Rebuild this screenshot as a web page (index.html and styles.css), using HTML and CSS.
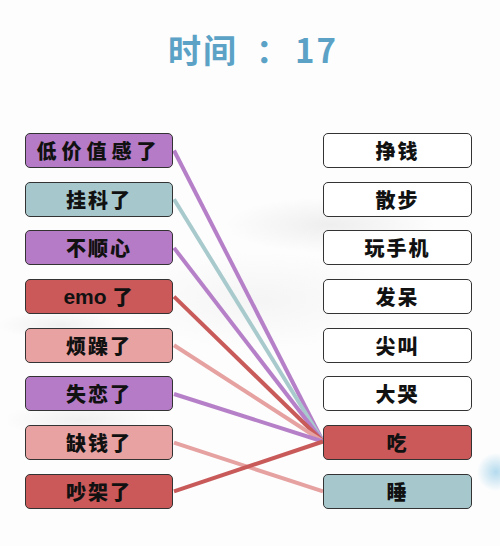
FILE: index.html
```html
<!DOCTYPE html>
<html lang="zh">

<head>
    <meta charset="UTF-8">
    <meta name="viewport" content="width=device-width, initial-scale=1.0">
    <title>连线</title>
    <link rel="stylesheet" href="styles.css">
</head>

<body>
    <div class="screen">
        <h1 class="timer">时间<span class="colon">：</span>17</h1>

        <div class="board">
            <!-- 连好的线: 左侧格子右边缘 -> 右侧格子左边缘 -->
            <svg class="links" viewBox="0 0 447 376" width="447" height="376">
                <line class="purple" x1="149" y1="17.5" x2="298" y2="308.5" />
                <line class="teal" x1="149" y1="66.2" x2="298" y2="308.5" />
                <line class="purple" x1="149" y1="114.9" x2="298" y2="308.5" />
                <line class="red" x1="149" y1="163.6" x2="298" y2="308.5" />
                <line class="pink" x1="149" y1="212.3" x2="298" y2="308.5" />
                <line class="purple" x1="149" y1="261" x2="298" y2="308.5" />
                <line class="pink" x1="149" y1="309.7" x2="298" y2="358.4" />
                <line class="red" x1="149" y1="358.4" x2="298" y2="308.5" />
            </svg>

            <div class="word purple wide">低价值感了</div>
            <div class="word blank">挣钱</div>

            <div class="word teal">挂科了</div>
            <div class="word blank">散步</div>

            <div class="word purple">不顺心</div>
            <div class="word blank">玩手机</div>

            <div class="word red"><span class="latin">emo</span>了</div>
            <div class="word blank">发呆</div>

            <div class="word pink">烦躁了</div>
            <div class="word blank">尖叫</div>

            <div class="word purple">失恋了</div>
            <div class="word blank">大哭</div>

            <div class="word pink">缺钱了</div>
            <div class="word red">吃</div>

            <div class="word red">吵架了</div>
            <div class="word teal">睡</div>
        </div>
    </div>
</body>
</html>
```

FILE: styles.css
```css
body, html {
    margin: 0;
    padding: 0;
    width: 100%;
    height: 100%;
    overflow: hidden;
}

.screen {
    width: 500px;
    height: 546px;
    box-sizing: border-box;
    padding-top: 29px;
    font-family: "Noto Sans CJK SC", "Noto Sans", sans-serif;
    /* 淡淡的水墨背景 */
    background:
        radial-gradient(ellipse 150px 40px at 330px 225px, rgba(200, 200, 200, 0.28), transparent 70%),
        radial-gradient(ellipse 200px 70px at 260px 300px, rgba(215, 215, 215, 0.22), transparent 70%),
        radial-gradient(ellipse 90px 20px at 60px 325px, rgba(200, 200, 200, 0.25), transparent 70%),
        radial-gradient(ellipse 110px 25px at 80px 420px, rgba(200, 200, 200, 0.25), transparent 70%),
        radial-gradient(circle 24px at 496px 472px, rgba(120, 190, 225, 0.55), transparent 80%),
        #fdfdfd;
}

.timer {
    margin: 0;
    padding-left: 6px;
    height: 40px;
    line-height: 40px;
    text-align: center;
    font-size: 33px;
    font-weight: 700;
    letter-spacing: 2px;
    color: #5ba2c6;
}

.timer .colon {
    margin: 0 4px 0 18px;
}

.board {
    position: relative;
    width: 447px;
    margin: 64px 0 0 25px;
    display: grid;
    grid-template-columns: 148px 1fr 149px;
    grid-auto-rows: 35px;
    row-gap: 13.7px;
}

.board .word:nth-of-type(odd) {
    grid-column: 1;
}

.board .word:nth-of-type(even) {
    grid-column: 3;
}

.links {
    position: absolute;
    top: 0;
    left: 0;
    pointer-events: none;
}

.links line {
    stroke-width: 4;
    stroke-linecap: butt;
}

.links line.purple { stroke: #b680c8; }
.links line.teal { stroke: #a8cacd; }
.links line.red { stroke: #c95a5a; }
.links line.pink { stroke: #e6a1a1; }

.word {
    position: relative;
    display: flex;
    justify-content: center;
    align-items: center;
    border: 1.5px solid #333;
    border-radius: 5px;
    font-size: 20px;
    font-weight: 900;
    letter-spacing: 2px;
    color: #111;
    background-color: #fff;
}

.word.wide {
    letter-spacing: 5px;
}

.word .latin {
    font-family: "Liberation Sans", Arial, sans-serif;
    font-weight: 700;
    font-size: 21px;
    letter-spacing: 0;
    margin-right: 6px;
}

.word.blank { background-color: #fff; }
.word.purple { background-color: #b57bc6; }
.word.teal { background-color: #a6c8cc; }
.word.red { background-color: #cb5959; }
.word.pink { background-color: #e9a2a2; }
```
